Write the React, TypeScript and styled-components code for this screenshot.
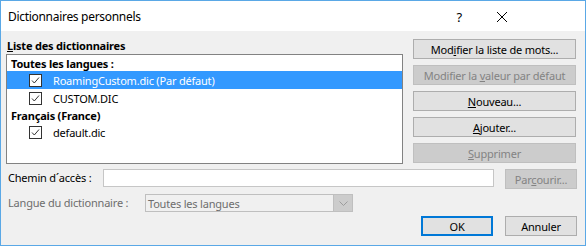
import styled, { createGlobalStyle } from "styled-components";

const GlobalStyle = createGlobalStyle`
  html, body {
    margin: 0;
    padding: 0;
    background: #ffffff;
  }
  body {
    font-family: "Segoe UI", "Noto Sans", sans-serif;
    font-size: 11px;
    letter-spacing: -0.2px;
    color: #000000;
  }
`;

interface Entry {
  name: string;
  selected?: boolean;
}

interface Group {
  title: string;
  entries: Entry[];
}

const groups: Group[] = [
  {
    title: "Toutes les langues :",
    entries: [
      { name: "RoamingCustom.dic (Par défaut)", selected: true },
      { name: "CUSTOM.DIC" },
    ],
  },
  {
    title: "Français (France)",
    entries: [{ name: "default.dic" }],
  },
];

function CheckIcon() {
  return (
    <svg width="13" height="13" viewBox="0 0 13 13">
      <rect x="0.5" y="0.5" width="12" height="12" fill="#ffffff" stroke="#333333" />
      <path d="M3 6.5 L5.3 9 L10 3.5" fill="none" stroke="#333333" strokeWidth="1" />
    </svg>
  );
}

function App() {
  return (
    <>
      <GlobalStyle />
      <Window>
        <TitleBar>
          <Title>Dictionnaires personnels</Title>
          <TitleButtons>
            <HelpGlyph>?</HelpGlyph>
            <svg width="10" height="10" viewBox="0 0 10 10">
              <path d="M0 0 L10 10 M10 0 L0 10" stroke="#000" strokeWidth="1" />
            </svg>
          </TitleButtons>
        </TitleBar>
        <Body>
          <TopRow>
            <ListColumn>
              <SectionLabel>
                <u>L</u>iste des dictionnaires
              </SectionLabel>
              <ListBox>
                {groups.map((g) => (
                  <div key={g.title}>
                    <GroupTitle>{g.title}</GroupTitle>
                    {g.entries.map((e) => (
                      <ListRow key={e.name} $selected={e.selected}>
                        <CheckIcon />
                        <span>{e.name}</span>
                      </ListRow>
                    ))}
                  </div>
                ))}
              </ListBox>
            </ListColumn>
            <ButtonColumn>
              <Button>
                Mod<u>i</u>fier la liste de mots...
              </Button>
              <Button disabled>
                Modifier la <u>v</u>aleur par défaut
              </Button>
              <Button>
                <u>N</u>ouveau...
              </Button>
              <Button>
                <u>A</u>jouter...
              </Button>
              <Button disabled>
                <u>S</u>upprimer
              </Button>
            </ButtonColumn>
          </TopRow>
          <PathRow>
            <FieldLabel>Chemin d´accès :</FieldLabel>
            <PathInput />
            <SmallButton disabled>
              Par<u>c</u>ourir...
            </SmallButton>
          </PathRow>
          <LangRow>
            <FieldLabel $muted>
              Lan<u>g</u>ue du dictionnaire :
            </FieldLabel>
            <Combo>
              <ComboText>Toutes les langues</ComboText>
              <ComboArrow>
                <svg width="9" height="5" viewBox="0 0 9 5">
                  <path d="M0.5 0.5 L4.5 4.5 L8.5 0.5" fill="none" stroke="#9c9c9c" />
                </svg>
              </ComboArrow>
            </Combo>
          </LangRow>
          <Footer>
            <SmallButton $default>OK</SmallButton>
            <SmallButton>Annuler</SmallButton>
          </Footer>
        </Body>
      </Window>
    </>
  );
}

export default App;

const Window = styled.div`
  width: 586px;
  height: 246px;
  box-sizing: border-box;
  border: 1px solid #5aa8e6;
  background: #f0f0f0;
  display: flex;
  flex-direction: column;
  overflow: hidden;
`;

const TitleBar = styled.div`
  height: 30px;
  background: #ffffff;
  display: flex;
  align-items: center;
  justify-content: space-between;
  padding: 0 0 0 7px;
`;

const Title = styled.div`
  font-size: 12px;
  letter-spacing: -0.3px;
  padding-top: 1px;
`;

const TitleButtons = styled.div`
  display: flex;
  align-items: center;
  gap: 35px;
  padding-right: 78px;
  padding-top: 1px;
`;

const HelpGlyph = styled.span`
  font-size: 13px;
`;

const Body = styled.div`
  flex: 1;
  padding: 8px 8px 0 5px;
  display: flex;
  flex-direction: column;
`;

const TopRow = styled.div`
  display: flex;
  gap: 10px;
`;

const ListColumn = styled.div`
  width: 397px;
  display: flex;
  flex-direction: column;
`;

const SectionLabel = styled.div`
  font-weight: bold;
  height: 15px;
  line-height: 14px;
  padding-left: 1px;
`;

const ListBox = styled.div`
  height: 110px;
  box-sizing: border-box;
  border: 1px solid #828282;
  background: #ffffff;
`;

const GroupTitle = styled.div`
  font-weight: bold;
  height: 16px;
  line-height: 17px;
  padding-left: 4px;
`;

const ListRow = styled.div<{ $selected?: boolean }>`
  height: 18px;
  display: flex;
  align-items: center;
  gap: 11px;
  padding-left: 22px;
  background: ${(p) => (p.$selected ? "#3399ff" : "transparent")};
  color: ${(p) => (p.$selected ? "#ffffff" : "#000000")};
`;

const ButtonColumn = styled.div`
  display: flex;
  flex-direction: column;
  gap: 6px;
`;

const Button = styled.button`
  width: 163px;
  height: 20px;
  box-sizing: border-box;
  padding: 0;
  font: inherit;
  letter-spacing: inherit;
  color: #000000;
  background: #e1e1e1;
  border: 1px solid #adadad;
  text-align: center;

  &:disabled {
    background: #cccccc;
    border-color: #bfbfbf;
    color: #838383;
  }
`;

const PathRow = styled.div`
  display: flex;
  align-items: flex-start;
  margin-top: 5px;
`;

const FieldLabel = styled.div<{ $muted?: boolean }>`
  padding-left: 2px;
  line-height: 18px;
  color: ${(p) => (p.$muted ? "#6d6d6d" : "#000000")};
`;

const PathInput = styled.div`
  margin-left: auto;
  width: 391px;
  height: 18px;
  box-sizing: border-box;
  border: 1px solid #c6c6c6;
  background: #ffffff;
  margin-right: 11px;
`;

const SmallButton = styled.button<{ $default?: boolean }>`
  width: 72px;
  height: 20px;
  box-sizing: border-box;
  padding: 0;
  font: inherit;
  letter-spacing: inherit;
  color: #000000;
  background: #e1e1e1;
  border: ${(p) => (p.$default ? "2px solid #0078d7" : "1px solid #adadad")};
  text-align: center;

  &:disabled {
    background: #cccccc;
    border-color: #bfbfbf;
    color: #838383;
  }
`;

const LangRow = styled.div`
  display: flex;
  align-items: center;
  margin-top: 5px;
`;

const Combo = styled.div`
  margin-left: auto;
  margin-right: 224px;
  width: 208px;
  height: 18px;
  box-sizing: border-box;
  border: 1px solid #bfbfbf;
  background: #f0f0f0;
  display: flex;
  align-items: center;
`;

const ComboText = styled.div`
  flex: 1;
  padding-left: 2px;
  color: #6d6d6d;
`;

const ComboArrow = styled.div`
  width: 18px;
  height: 16px;
  background: #cccccc;
  border-left: 1px solid #bfbfbf;
  display: flex;
  align-items: center;
  justify-content: center;
`;

const Footer = styled.div`
  display: flex;
  justify-content: flex-end;
  gap: 12px;
  margin-top: 4px;
`;
